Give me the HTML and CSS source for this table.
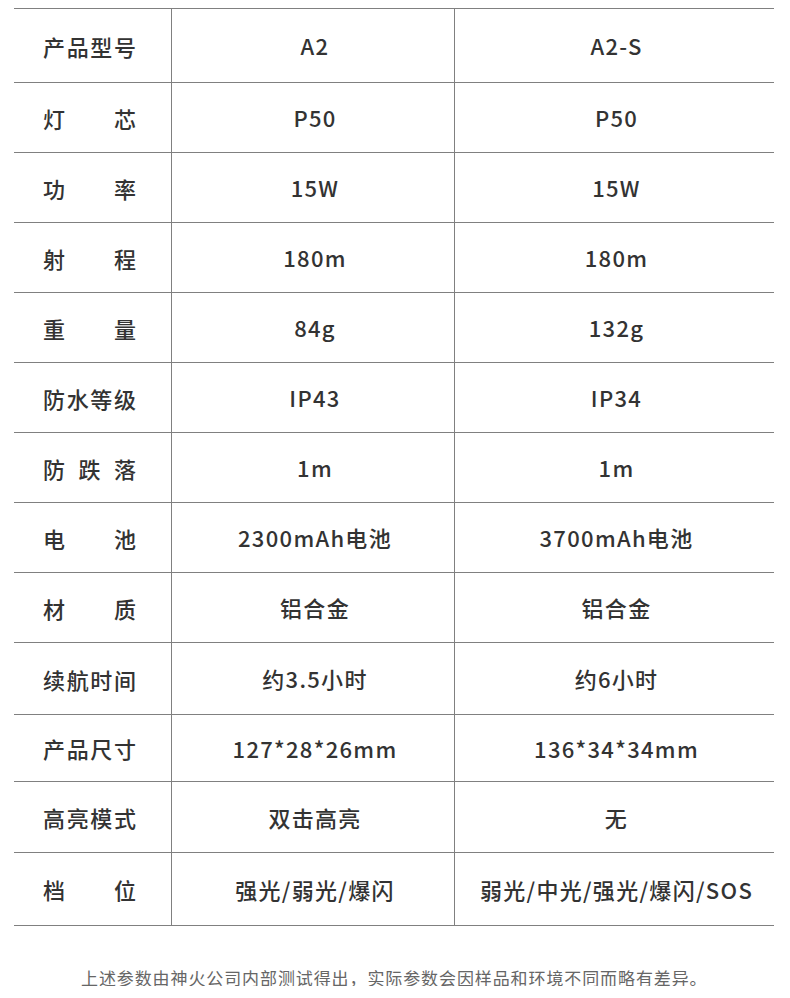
FILE: index.html
```html
<!DOCTYPE html>
<html lang="zh-CN">
<head>
<meta charset="utf-8">
<link rel="stylesheet" href="styles.css">
</head>
<body>
<table class="spec">
  <tr class="r74"><th><span class="lbl">产品型号</span></th><td>A2</td><td>A2-S</td></tr>
  <tr><th><span class="lbl">灯芯</span></th><td>P50</td><td>P50</td></tr>
  <tr><th><span class="lbl">功率</span></th><td>15W</td><td>15W</td></tr>
  <tr><th><span class="lbl">射程</span></th><td>180m</td><td>180m</td></tr>
  <tr><th><span class="lbl">重量</span></th><td>84g</td><td>132g</td></tr>
  <tr><th><span class="lbl">防水等级</span></th><td>IP43</td><td>IP34</td></tr>
  <tr><th><span class="lbl">防跌落</span></th><td>1m</td><td>1m</td></tr>
  <tr><th><span class="lbl">电池</span></th><td>2300mAh电池</td><td>3700mAh电池</td></tr>
  <tr><th><span class="lbl">材质</span></th><td>铝合金</td><td>铝合金</td></tr>
  <tr class="r72"><th><span class="lbl">续航时间</span></th><td>约3.5小时</td><td>约6小时</td></tr>
  <tr class="r67"><th><span class="lbl">产品尺寸</span></th><td>127*28*26mm</td><td>136*34*34mm</td></tr>
  <tr class="r71"><th><span class="lbl">高亮模式</span></th><td>双击高亮</td><td>无</td></tr>
  <tr class="r73"><th><span class="lbl">档位</span></th><td>强光/弱光/爆闪</td><td>弱光/中光/强光/爆闪/SOS</td></tr>
</table>
<p class="note">上述参数由神火公司内部测试得出，实际参数会因样品和环境不同而略有差异。</p>
</body>
</html>
```
FILE: styles.css
```css
html, body {
  margin: 0;
  padding: 0;
  background: #ffffff;
}
body {
  padding: 8px 16px 0 14px;
  font-family: "Noto Sans CJK SC", "Noto Sans", sans-serif;
  color: #333333;
}
.spec {
  width: 760px;
  border-collapse: collapse;
  table-layout: fixed;
}
.spec tr {
  height: 70px;
}
.spec tr.r74 { height: 74px; }
.spec tr.r72 { height: 72px; }
.spec tr.r67 { height: 67px; }
.spec tr.r71 { height: 71px; }
.spec tr.r73 { height: 73px; }
.spec th, .spec td {
  border-top: 1px solid #808080;
  border-bottom: 1px solid #808080;
  padding: 0;
  font-size: 22px;
  font-weight: 500;
  line-height: 1;
  text-align: center;
  vertical-align: middle;
  color: #333333;
}
.spec th {
  width: 157px;
  border-right: 1px solid #808080;
}
.spec td {
  letter-spacing: 1.3px;
  padding-left: 4px;
  padding-bottom: 1px;
}
.spec td:nth-child(2) {
  width: 278px;
  border-right: 1px solid #808080;
}
.lbl {
  display: inline-block;
  width: 93px;
  text-align: justify;
  text-align-last: justify;
  margin-left: -6px;
}
.note {
  margin: 43px 0 0 0;
  padding-left: 67px;
  font-size: 17px;
  letter-spacing: 0.9px;
  color: #666666;
  line-height: 1;
  font-weight: 400;
}
```
